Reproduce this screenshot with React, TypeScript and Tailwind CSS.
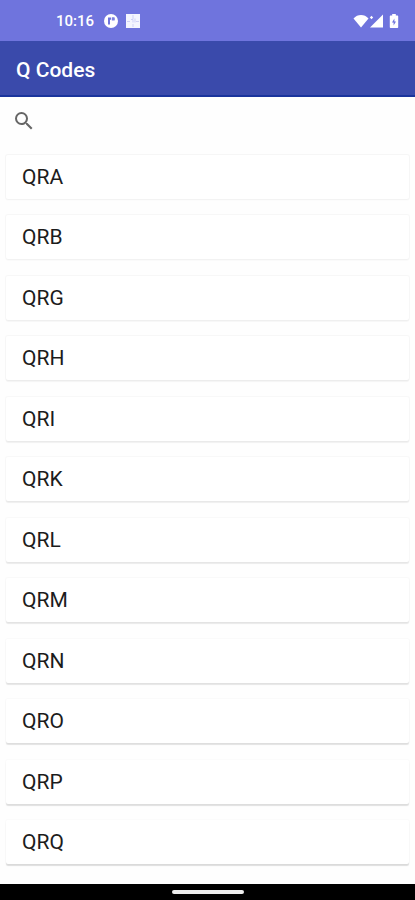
const codes = ['QRA', 'QRB', 'QRG', 'QRH', 'QRI', 'QRK', 'QRL', 'QRM', 'QRN', 'QRO', 'QRP', 'QRQ']

export default function App() {
  return (
    <div className="flex min-h-screen flex-col bg-[#fefefe] font-['Roboto','Liberation_Sans',sans-serif]">
      <StatusBar />

      <header className="flex h-14 items-center border-b-2 border-[#1a349c] bg-[#3a4aab] px-4 pt-1">
        <h1 className="text-[21px] leading-7 font-medium text-white">Q Codes</h1>
      </header>

      <div className="flex h-12 items-center px-3">
        <button type="button" aria-label="Search" className="text-[#666666]">
          <svg viewBox="0 0 24 24" className="size-6" fill="currentColor">
            <path d="M15.5 14h-.79l-.28-.27A6.47 6.47 0 0 0 16 9.5 6.5 6.5 0 1 0 9.5 16c1.61 0 3.09-.59 4.23-1.57l.27.28v.79l5 4.99L20.49 19l-4.99-5zm-6 0C7.01 14 5 11.99 5 9.5S7.01 5 9.5 5 14 7.01 14 9.5 11.99 14 9.5 14z" />
          </svg>
        </button>
      </div>

      <ul className="flex flex-1 flex-col justify-between gap-4 px-1.5 pt-2.5 pb-5">
        {codes.map((code, i) => (
          <CodeCard key={code} code={code} depth={i / (codes.length - 1)} />
        ))}
      </ul>

      <div className="flex h-4 items-center justify-center bg-black">
        <div className="h-1 w-18 rounded-full bg-[#eeeeee]" />
      </div>
    </div>
  )
}

// Cards further down the screen cast a heavier shadow
function CodeCard({ code, depth }: { code: string; depth: number }) {
  const bottom = 0.01 + depth * 0.12
  const ring = 0.035 - depth * 0.02
  return (
    <li>
      <button
        type="button"
        className="flex h-11 w-full items-center rounded-xs bg-white px-4 text-left text-[21px] leading-7 text-[#1c1c1c]"
        style={{
          boxShadow: `0 2px 1px rgba(0,0,0,${bottom}), 0 0 1px 1px rgba(0,0,0,${ring})`,
        }}
      >
        {code}
      </button>
    </li>
  )
}

function StatusBar() {
  return (
    <div className="flex h-[41px] items-center bg-[#6f74dd] pr-4 pl-14 text-white">
      <span className="text-[15px] leading-5 font-medium">10:16</span>
      <svg viewBox="0 0 14 14" className="ml-2.5 size-3.5">
        <circle cx="7" cy="7" r="7" fill="#fff" />
        <path d="M4 3.600h3.200v2.200H6v4.600H4z" fill="#6f74dd" />
        <path d="M8 3.200h2.400c.5.900.6 2.200.2 3.400H7.800V5.400H8z" fill="#7c80e0" />
      </svg>
      <svg viewBox="0 0 14 14" className="ml-2 size-3.5">
        <path d="M0 0h14v14H0z" fill="#f4f5ff" />
        <path d="M7 1v4M1 7.500h3M10 7.500h3M7 10v3M5 5.500h2v3M9 4.500v4" fill="none" stroke="#cfd1f7" />
      </svg>

      <div className="ml-auto flex items-center">
        <svg viewBox="0 0 16 14" className="h-3.5 w-4" fill="currentColor">
          <path d="M8 13.5.5 4.4C2.600 2.200 5.200 1 8 1s5.400 1.200 7.500 3.400z" />
        </svg>
        <svg viewBox="0 0 14 14" className="h-3.5 w-3.5" fill="currentColor">
          <path d="M14 .5v13H1z" />
          <path d="m2.500 1.800 1.700 1.700-1.700 1.700L.8 3.500z" />
        </svg>
        <svg viewBox="0 0 10 14" className="ml-1.5 h-3.5 w-2.5">
          <path
            d="M3.200 0h3.600v1.500h1.400c.6 0 1 .4 1 1V13c0 .6-.4 1-1 1H1.800c-.6 0-1-.4-1-1V2.500c0-.6.4-1 1-1h1.400z"
            fill="#fff"
          />
          <path d="M5.400 4.500 3 8.400h1.600v3L7 7.500H5.400z" fill="#6f74dd" />
        </svg>
      </div>
    </div>
  )
}
